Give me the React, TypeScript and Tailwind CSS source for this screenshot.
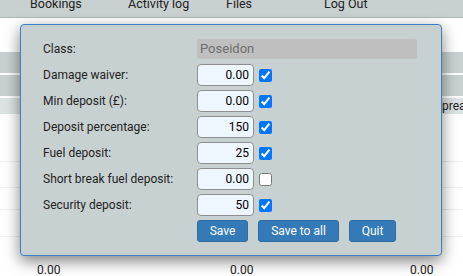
import { useState } from "react";

const rows = [
  { label: "Damage waiver:", value: "0.00", checked: true },
  { label: "Min deposit (£):", value: "0.00", checked: true },
  { label: "Deposit percentage:", value: "150", checked: true },
  { label: "Fuel deposit:", value: "25", checked: true },
  { label: "Short break fuel deposit:", value: "0.00", checked: false },
  { label: "Security deposit:", value: "50", checked: true },
];

export default function App() {
  const [items, setItems] = useState(rows);

  return (
    <div className="relative h-[276px] w-[463px] overflow-hidden bg-white font-['Roboto',sans-serif] text-[12px] text-[#222]">
      {/* Page behind the dialog */}
      <div className="flex h-[18px] border-b border-[#aeb6b6] bg-[#c8d0d0] pl-[30px] text-[12.5px] leading-[8px]">
        <span className="w-[98px]">Bookings</span>
        <span className="w-[98px]">Activity log</span>
        <span className="w-[98px]">Files</span>
        <span className="w-[98px]">Log Out</span>
      </div>
      <div className="mt-[34px] flex flex-col">
        <div className="h-[21px] bg-[#c8d0d0]" />
        <div className="h-[2px] bg-white" />
        <div className="h-[21px] bg-[#c8d0d0]" />
        <div className="h-[2px] bg-white" />
        <div className="flex h-[16px] items-center whitespace-nowrap bg-[#dde2e2] pl-[442px] leading-none">
          preak
        </div>
        <div className="h-[48px] border-b border-[#eeeeee]" />
        <div className="h-[26px] border-b border-[#eeeeee]" />
        <div className="h-[22px] border-b border-[#eeeeee]" />
        <div className="h-[27px] border-b border-[#eeeeee]" />
        <div className="h-[26px]" />
        <div className="flex h-[14px] items-center leading-none">
          <span className="ml-[37px] w-[193px]">0.00</span>
          <span className="w-[180px]">0.00</span>
          <span>0.00</span>
        </div>
      </div>

      {/* Dialog */}
      <div className="absolute left-[20px] top-[24px] w-[422px] rounded-[4px] border border-[#3d7fc4] bg-[#c8d1d1] pb-[13px] pl-[22px] pr-[24px] pt-[14px] shadow-[0_5px_15px_rgba(0,0,0,0.5)]">
        <div className="mb-[5px] flex h-[20px] items-center">
          <span className="w-[154px]">Class:</span>
          <div className="flex h-[20px] flex-1 items-center rounded-[3px] bg-[#bfbfbf] px-[3px] text-[13px] text-[#6e6e6e]">
            Poseidon
          </div>
        </div>
        {items.map((r, i) => (
          <div key={r.label} className="mb-[4px] flex h-[22px] items-center">
            <span className="w-[154px]">{r.label}</span>
            <input
              type="text"
              defaultValue={r.value}
              className="h-[22px] w-[57px] rounded-[4px] border border-[#8f8f8f] bg-[#eef6ff] px-[4px] text-right text-[12px] text-black outline-none"
            />
            <input
              type="checkbox"
              checked={r.checked}
              onChange={() =>
                setItems(items.map((x, j) => (j === i ? { ...x, checked: !x.checked } : x)))
              }
              className="ml-[5px] h-[13px] w-[13px]"
            />
          </div>
        ))}
        <div className="flex h-[22px] items-center pl-[154px]">
          <button className="h-[22px] w-[51px] rounded-[3px] border border-[#2e6da4] bg-[#337ab7] text-white">
            Save
          </button>
          <button className="ml-[10px] h-[22px] w-[81px] rounded-[3px] border border-[#2e6da4] bg-[#337ab7] text-white">
            Save to all
          </button>
          <button className="ml-[10px] h-[22px] w-[47px] rounded-[3px] border border-[#2e6da4] bg-[#337ab7] text-white">
            Quit
          </button>
        </div>
      </div>
    </div>
  );
}
